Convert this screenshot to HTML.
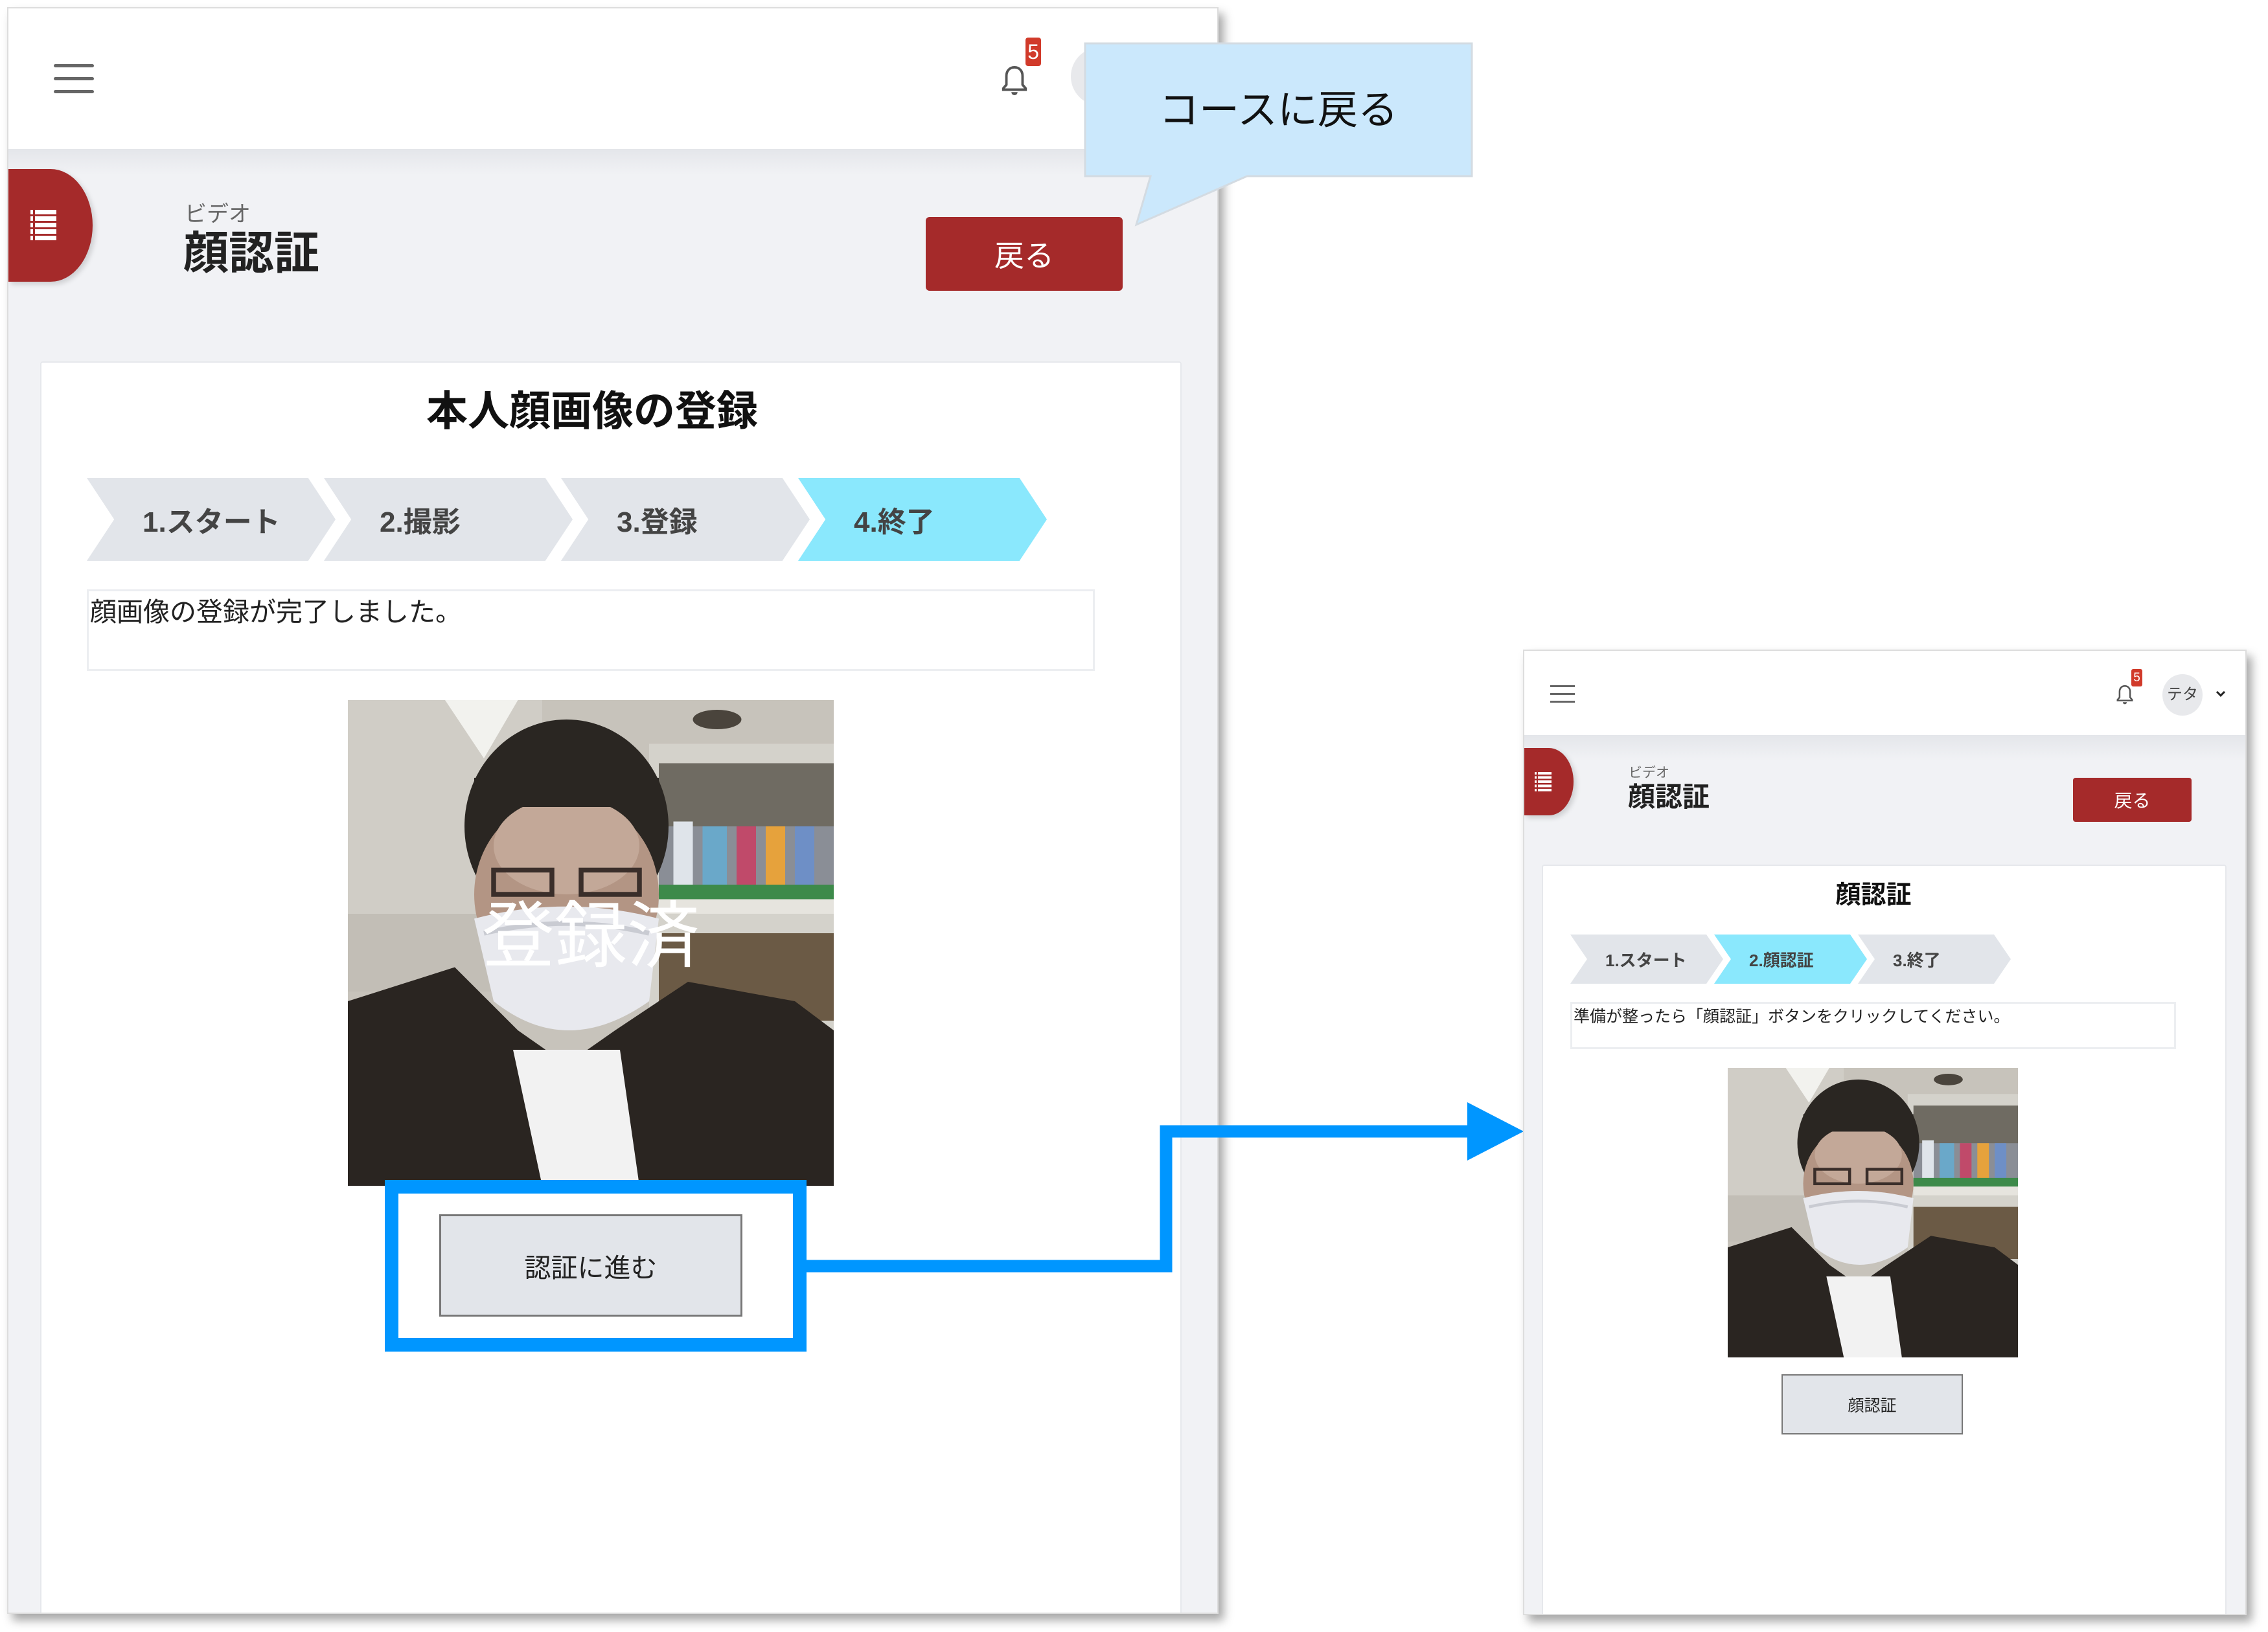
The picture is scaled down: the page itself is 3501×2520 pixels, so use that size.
<!DOCTYPE html>
<html><head><meta charset="utf-8">
<style>
*{margin:0;padding:0;box-sizing:border-box}
body{width:3501px;height:2520px;background:#fff;position:relative;overflow:hidden;font-family:"Liberation Sans","Noto Sans CJK JP",sans-serif;color:#222}
.abs{position:absolute}
.frame{position:absolute;background:#f1f2f5;box-shadow:8px 10px 14px rgba(0,0,0,.35);border:2px solid #ddd;overflow:hidden}
.hdr{position:absolute;left:0;top:0;right:0;background:#fff}
.hdr:after{content:"";position:absolute;left:0;right:0;bottom:-40px;height:40px;background:linear-gradient(#e4e6ea,#f1f2f5)}
.card{position:absolute;background:#fff;border:2px solid #e6e8ec;border-radius:4px}
.chev{position:absolute;background:#e2e5ea;color:#444;font-weight:bold;display:flex;align-items:center}
.chev.on{background:#8ae8fd}
.redbtn{position:absolute;background:#a52a2a;color:#fff;border-radius:6px;display:flex;align-items:center;justify-content:center}
.graybtn{position:absolute;background:#e2e5ea;border:3px solid #777;display:flex;align-items:center;justify-content:center;color:#222}
.msg{position:absolute;border:3px solid #eceef1;background:#fff}
.tab{position:absolute;background:#a52a2a;border-radius:0 50% 50% 0/0 50% 50% 0;box-shadow:4px 4px 8px rgba(0,0,0,.15)}
</style></head><body>

<svg width="0" height="0" style="position:absolute">
<defs>
<symbol id="photo" viewBox="0 0 100 100" preserveAspectRatio="none">
<rect width="100" height="100" fill="#c7c3bb"/>
<rect width="40" height="50" fill="#d0cdc6"/>
<polygon points="20,0 35,0 28,12" fill="#f2f2ee"/>
<rect x="0" y="44" width="40" height="16" fill="#c2beb6"/>
<rect x="62" y="9" width="38" height="62" fill="#d4d2cb"/>
<rect x="64" y="13" width="36" height="14" fill="#6f6b62"/>
<ellipse cx="76" cy="4" rx="5" ry="2" fill="#4a443c"/>
<rect x="64" y="26" width="36" height="14" fill="#8a8e96"/>
<rect x="67" y="25" width="4" height="14" fill="#dfe4ea"/>
<rect x="73" y="26" width="5" height="13" fill="#6aa8c9"/>
<rect x="80" y="26" width="4" height="13" fill="#c04a6a"/>
<rect x="86" y="26" width="4" height="13" fill="#e6a23c"/>
<rect x="92" y="26" width="4" height="13" fill="#6e8fc6"/>
<rect x="64" y="38" width="36" height="3" fill="#3d8a4a"/>
<rect x="64" y="41" width="36" height="3" fill="#e6e4de"/>
<rect x="64" y="48" width="36" height="18" fill="#6b5a45"/>
<ellipse cx="45" cy="26" rx="21" ry="22" fill="#2a2622"/>
<ellipse cx="45" cy="40" rx="19" ry="20" fill="#b39584"/>
<ellipse cx="45" cy="30" rx="15" ry="10" fill="#c3a898"/>
<rect x="26" y="16" width="38" height="6" fill="#2a2622"/>
<rect x="30" y="35" width="12" height="5" fill="none" stroke="#3a2e2a" stroke-width="1"/>
<rect x="48" y="35" width="12" height="5" fill="none" stroke="#3a2e2a" stroke-width="1"/>
<polygon points="0,62 22,55 35,68 45,75 55,68 70,58 92,62 100,68 100,100 0,100" fill="#2a2521"/>
<polygon points="34,72 56,72 60,100 40,100" fill="#f2f2f2"/>
<path d="M26,45 Q45,40 64,45 L62,62 Q45,74 30,62 Z" fill="#e8e9ee"/>
<path d="M28,48 Q45,44 62,48" stroke="#c9cbd2" stroke-width="1" fill="none"/>
</symbol>
</defs>
</svg>

<!-- LEFT FRAME -->
<div class="frame" style="left:11px;top:11px;width:1870px;height:2481px">
  <div class="hdr" style="height:217px">
    <div class="abs" style="left:70px;top:86px;width:62px;height:5px;background:#666;border-radius:3px"></div>
    <div class="abs" style="left:70px;top:106px;width:62px;height:5px;background:#666;border-radius:3px"></div>
    <div class="abs" style="left:70px;top:126px;width:62px;height:5px;background:#666;border-radius:3px"></div>
    <svg class="abs" style="left:1530px;top:84px" width="46" height="56" viewBox="0 0 24 28"><path d="M12 3c-4 0-6.5 3-6.5 7v7L3 20v1h18v-1l-2.5-3v-7c0-4-2.5-7-6.5-7z" fill="none" stroke="#555" stroke-width="2"/><path d="M9.5 23a2.5 2.5 0 0 0 5 0z" fill="#555"/></svg>
    <div class="abs" style="left:1570px;top:45px;width:24px;height:44px;background:#d13a2a;border-radius:4px;color:#fff;font-size:32px;text-align:center;line-height:44px">5</div>
    <div class="abs" style="left:1640px;top:60px;width:90px;height:90px;border-radius:50%;background:#e8e9ec"></div>
  </div>
  <div class="tab" style="left:0;top:248px;width:130px;height:174px"></div>
  <div class="abs" style="left:34px;top:311px;width:40px;height:48px;background:repeating-linear-gradient(#fff 0 7px,transparent 7px 10px)"></div>
  <div class="abs" style="left:38px;top:311px;width:3px;height:48px;background:#a52a2a"></div>
  <div class="abs" style="left:272px;top:290px;font-size:34px;color:#666">ビデオ</div>
  <div class="abs" style="left:270px;top:340px;font-size:70px;font-weight:bold;color:#222;line-height:1.1">顔認証</div>
  <div class="redbtn" style="left:1416px;top:322px;width:304px;height:114px;font-size:46px">戻る</div>

  <div class="card" style="left:49px;top:545px;width:1762px;height:1960px">
    <div class="abs" style="left:0;width:1700px;top:24px;text-align:center;font-size:64px;font-weight:bold;color:#111">本人顔画像の登録</div>
    <div class="chev" style="left:70px;top:178px;width:384px;height:128px;clip-path:polygon(0 0,89% 0,100% 50%,89% 100%,0 100%,11% 50%);padding-left:86px;font-size:44px">1.スタート</div>
    <div class="chev" style="left:436px;top:178px;width:384px;height:128px;clip-path:polygon(0 0,89% 0,100% 50%,89% 100%,0 100%,11% 50%);padding-left:86px;font-size:44px">2.撮影</div>
    <div class="chev" style="left:802px;top:178px;width:384px;height:128px;clip-path:polygon(0 0,89% 0,100% 50%,89% 100%,0 100%,11% 50%);padding-left:86px;font-size:44px">3.登録</div>
    <div class="chev on" style="left:1168px;top:178px;width:384px;height:128px;clip-path:polygon(0 0,89% 0,100% 50%,89% 100%,0 100%,11% 50%);padding-left:86px;font-size:44px">4.終了</div>
    <div class="msg" style="left:70px;top:350px;width:1556px;height:126px;padding:4px 0 0 2px;font-size:41px;line-height:56px">顔画像の登録が完了しました。</div>
    <svg class="abs" style="left:473px;top:521px" width="750" height="750"><use href="#photo" width="750" height="750"/></svg>
    <div class="abs" style="left:473px;top:830px;width:750px;text-align:center;font-size:112px;color:#fff;line-height:1">登録済</div>
    <div class="graybtn" style="left:614px;top:1315px;width:468px;height:158px;font-size:41px">認証に進む</div>
  </div>
</div>

<!-- callout -->
<svg class="abs" style="left:0;top:0" width="2300" height="360">
  <polygon points="1675,67 2272,67 2272,272 1925,272 1754,347 1776,272 1675,272" fill="#cbe8fc" stroke="#d3dbe2" stroke-width="3"/>
</svg>
<div class="abs" style="left:1675px;top:140px;width:597px;text-align:center;font-size:62px;line-height:1;color:#111">コースに戻る</div>

<!-- blue highlight + arrow -->
<div class="abs" style="left:594px;top:1822px;width:651px;height:265px;border:21px solid #0096ff"></div>
<svg class="abs" style="left:0;top:0" width="3501" height="2520">
  <polyline points="1240,1955 1800,1955 1800,1747 2285,1747" fill="none" stroke="#0096ff" stroke-width="19"/>
  <polygon points="2265,1702 2352,1747 2265,1792" fill="#0096ff"/>
</svg>

<!-- RIGHT FRAME -->
<div class="frame" style="left:2351px;top:1003px;width:1117px;height:1491px">
  <div class="hdr" style="height:130px">
    <div class="abs" style="left:40px;top:53px;width:38px;height:3px;background:#666"></div>
    <div class="abs" style="left:40px;top:65px;width:38px;height:3px;background:#666"></div>
    <div class="abs" style="left:40px;top:77px;width:38px;height:3px;background:#666"></div>
    <svg class="abs" style="left:912px;top:50px" width="30" height="36" viewBox="0 0 24 28"><path d="M12 3c-4 0-6.5 3-6.5 7v7L3 20v1h18v-1l-2.5-3v-7c0-4-2.5-7-6.5-7z" fill="none" stroke="#555" stroke-width="2"/><path d="M9.5 23a2.5 2.5 0 0 0 5 0z" fill="#555"/></svg>
    <div class="abs" style="left:937px;top:28px;width:17px;height:27px;background:#d13a2a;border-radius:3px;color:#fff;font-size:19px;text-align:center;line-height:27px">5</div>
    <div class="abs" style="left:985px;top:36px;width:62px;height:64px;border-radius:50%;background:#e8e9ec;font-size:24px;color:#444;text-align:center;line-height:64px">テタ</div>
    <svg class="abs" style="left:1067px;top:60px" width="16" height="12" viewBox="0 0 16 12"><path d="M2 3l6 6 6-6" fill="none" stroke="#222" stroke-width="3"/></svg>
  </div>
  <div class="tab" style="left:0;top:150px;width:76px;height:104px"></div>
  <div class="abs" style="left:16px;top:187px;width:26px;height:30px;background:repeating-linear-gradient(#fff 0 4px,transparent 4px 6.5px)"></div>
  <div class="abs" style="left:19px;top:187px;width:2px;height:30px;background:#a52a2a"></div>
  <div class="abs" style="left:161px;top:172px;font-size:21px;color:#666">ビデオ</div>
  <div class="abs" style="left:160px;top:203px;font-size:42px;font-weight:bold;color:#222;line-height:1.1">顔認証</div>
  <div class="redbtn" style="left:847px;top:196px;width:183px;height:68px;font-size:28px;border-radius:4px">戻る</div>

  <div class="card" style="left:27px;top:330px;width:1057px;height:1170px">
    <div class="abs" style="left:0;width:1020px;top:14px;text-align:center;font-size:39px;font-weight:bold;color:#111">顔認証</div>
    <div class="chev" style="left:42px;top:106px;width:236px;height:76px;clip-path:polygon(0 0,89% 0,100% 50%,89% 100%,0 100%,11% 50%);padding-left:54px;font-size:26px">1.スタート</div>
    <div class="chev on" style="left:264px;top:106px;width:236px;height:76px;clip-path:polygon(0 0,89% 0,100% 50%,89% 100%,0 100%,11% 50%);padding-left:54px;font-size:26px">2.顔認証</div>
    <div class="chev" style="left:486px;top:106px;width:236px;height:76px;clip-path:polygon(0 0,89% 0,100% 50%,89% 100%,0 100%,11% 50%);padding-left:54px;font-size:26px">3.終了</div>
    <div class="msg" style="left:42px;top:210px;width:935px;height:73px;padding-left:2px;font-size:25px;line-height:40px">準備が整ったら「顔認証」ボタンをクリックしてください。</div>
    <svg class="abs" style="left:285px;top:312px" width="448" height="447"><use href="#photo" width="448" height="447"/></svg>
    <div class="graybtn" style="left:368px;top:785px;width:280px;height:93px;font-size:25px;border-width:2px">顔認証</div>
  </div>
</div>

</body></html>
